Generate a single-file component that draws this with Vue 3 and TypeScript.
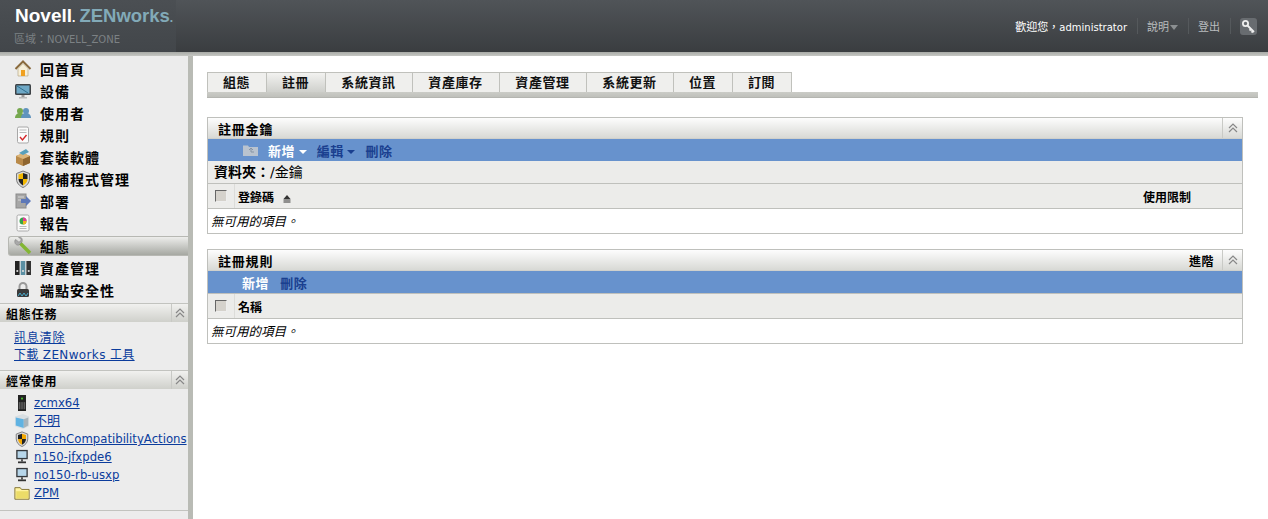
<script setup lang="ts">
const nav = [
  { t: '回首頁', i: 'home' }, { t: '設備', i: 'monitor' }, { t: '使用者', i: 'users' }, { t: '規則', i: 'policy' },
  { t: '套裝軟體', i: 'box' }, { t: '修補程式管理', i: 'shield' }, { t: '部署', i: 'deploy' }, { t: '報告', i: 'report' },
  { t: '組態', i: 'wrench', active: true }, { t: '資產管理', i: 'binder' }, { t: '端點安全性', i: 'lock' },
]
const freq = [
  { t: 'zcmx64', i: 'server' }, { t: '不明', i: 'cube', cjk: true }, { t: 'PatchCompatibilityActions', i: 'shield' },
  { t: 'n150-jfxpde6', i: 'pc' }, { t: 'no150-rb-usxp', i: 'pc' }, { t: 'ZPM', i: 'folder' },
]
const tabs = ['組態', '註冊', '系統資訊', '資產庫存', '資產管理', '系統更新', '位置', '訂閱']
const tabWidths = [60, 59, 87, 87, 87, 87, 59, 59]
</script>

<template>
  <div class="page">
    <header class="top">
      <div class="brand">
        <div class="logo"><span class="nov">Novell<i>.</i></span><span class="zen">ZENworks<i>.</i></span></div>
        <div class="zone"><span class="cj">區域：</span>NOVELL_ZONE</div>
      </div>
      <div class="user">
        <span class="welcome"><span class="cj">歡迎您，</span>administrator</span>
        <span class="sep"></span>
        <span class="ulink">說明<b class="caret"></b></span>
        <span class="sep"></span>
        <span class="ulink">登出</span>
        <span class="sep"></span>
        <span class="keybox">
          <svg width="15" height="15" viewBox="0 0 15 15"><circle cx="4.500" cy="4.500" r="2.600" fill="none" stroke="#eee" stroke-width="1.800"/><path d="M6.500 6.500l6.500 6.500M10 10l-1.500 1.500M12 12l-1.500 1.500" stroke="#eee" stroke-width="1.800" fill="none"/></svg>
        </span>
      </div>
    </header>
    <div class="shadow"></div>
    <div class="body">
      <aside class="side">
        <nav class="nav">
          <div v-for="n in nav" :key="n.t" class="nav-row" :class="{ active: n.active }">
            <span class="nav-ic">
              <svg width="18" height="18" viewBox="0 0 18 18">
                <g v-if="n.i === 'home'"><path d="M1.500 9L9 1.500 16.500 9" fill="none" stroke="#8a6a3c" stroke-width="2"/><path d="M4 8.500L9 3.500l5 5V16H4z" fill="#f6efd8" stroke="#b9a988" stroke-width=".7"/><path d="M7 10h4v6H7z" fill="#f0a020"/></g>
                <g v-else-if="n.i === 'monitor'"><rect x="1" y="2" width="16" height="11" rx="1.500" fill="#3d4246"/><rect x="2.500" y="3.500" width="13" height="8" fill="#6ea8c6"/><path d="M3 4l11 7" stroke="#2f6f8f" stroke-width="1"/><path d="M7.500 13h3v2h-3z" fill="#999"/><path d="M5 15h8v1.500H5z" fill="#bbb"/></g>
                <g v-else-if="n.i === 'users'"><circle cx="6" cy="7" r="3" fill="#76a84f"/><path d="M1 14c0-3 2-5 5-5s5 2 5 5z" fill="#76a84f"/><circle cx="12" cy="7" r="3" fill="#5f93bd"/><path d="M7 14c0-3 2-5 5-5s5 2 5 5z" fill="#5f93bd"/></g>
                <g v-else-if="n.i === 'policy'"><rect x="3.500" y="1" width="11" height="16" rx="1.500" fill="#fbfbfb" stroke="#a8a8a8"/><path d="M5.500 4h7M5.500 6.500h7" stroke="#bbb"/><path d="M6 11l2.500 3 4-5" fill="none" stroke="#d4262a" stroke-width="1.400"/></g>
                <g v-else-if="n.i === 'box'"><path d="M2 8l7-3 7 3v7l-7 3-7-3z" fill="#b98a4a"/><path d="M9 11v7l7-3V8z" fill="#8f6630"/><path d="M2 8l7 3 7-3-7-3z" fill="#dcb67a"/><path d="M5 5l7-4 3 3-6 3z" fill="#58a0bb"/></g>
                <g v-else-if="n.i === 'shield'"><path d="M9 1l6.500 2.500V9c0 4-3 7-6.500 8.500C5.500 16 2.500 13 2.500 9V3.500z" fill="#d8d8d8" stroke="#777"/><path d="M9 3v6H4.500V4.500z" fill="#f3b800"/><path d="M9 9h4.500c0 3-2 5-4.500 6.500z" fill="#f3b800"/><path d="M9 3l4.500 1.500V9H9z" fill="#222"/><path d="M9 9v6.500C6.500 14 4.500 12 4.500 9z" fill="#222"/></g>
                <g v-else-if="n.i === 'deploy'"><rect x="2" y="2" width="10" height="14" fill="#a6a6a6" stroke="#8b8b8b"/><path d="M4 5h6M4 8h6" stroke="#d8d8d8"/><path d="M7 7h5V4l5 5-5 5v-3H7z" fill="#5d78b8"/></g>
                <g v-else-if="n.i === 'report'"><rect x="3" y="1" width="12" height="16" rx="1.500" fill="#fafafa" stroke="#aaa"/><circle cx="9" cy="7" r="3.500" fill="#35a54a"/><path d="M9 7V3.500A3.500 3.500 0 0 1 12.500 7z" fill="#e33a98"/><path d="M9 7h3.500A3.500 3.500 0 0 1 9 10.500z" fill="#f2b51d"/><path d="M5.500 12.500h7M5.500 14.500h7" stroke="#bbb"/></g>
                <g v-else-if="n.i === 'wrench'"><path d="M6 6l10 10" stroke="#83b634" stroke-width="3.500"/><path d="M2 2.500L4.500 5l2-.5.500-2L4.500 0C7.500-.5 9 2 8 5l-3 3C2 9 0 6 1 3z" fill="#a9a9a9" stroke="#7d7d7d" stroke-width=".5"/></g>
                <g v-else-if="n.i === 'binder'"><rect x="1" y="2" width="4.600" height="14" fill="#222"/><rect x="6.700" y="2" width="4.600" height="14" fill="#5a8fa3"/><rect x="12.400" y="2" width="4.600" height="14" fill="#333"/><circle cx="3.300" cy="12" r="1.100" fill="#ddd"/><circle cx="9" cy="12" r="1.100" fill="#ddd"/><circle cx="14.700" cy="12" r="1.100" fill="#ddd"/></g>
                <g v-else-if="n.i === 'lock'"><path d="M5.500 8V5.500a3.500 3.500 0 0 1 7 0V8" fill="none" stroke="#9a9a9a" stroke-width="2"/><rect x="3" y="8" width="12" height="8" rx="1.500" fill="#3a3a3a"/><path d="M4 15l2-3 2 3 2-3 2 3 2-3" fill="none" stroke="#4aa8c8"/></g>
              </svg>
            </span>
            <span>{{ n.t }}</span>
          </div>
        </nav>
        <section class="sbox first">
          <div class="sbox-head">
            <span>組態任務</span>
            <span class="collapse"><svg width="12" height="10" viewBox="0 0 12 10"><path d="M2 5l4-4 4 4M2 9l4-4 4 4" fill="none" stroke="#888" stroke-width="1.200"/></svg></span>
          </div>
          <div class="tasks">
            <a>訊息清除</a>
            <a>下載 ZENworks 工具</a>
          </div>
        </section>
        <section class="sbox second">
          <div class="sbox-head">
            <span>經常使用</span>
            <span class="collapse"><svg width="12" height="10" viewBox="0 0 12 10"><path d="M2 5l4-4 4 4M2 9l4-4 4 4" fill="none" stroke="#888" stroke-width="1.200"/></svg></span>
          </div>
          <div class="freq">
            <div v-for="f in freq" :key="f.t" class="freq-row">
              <span class="fic">
                <svg width="16" height="16" viewBox="0 0 18 18">
                  <g v-if="f.i === 'server'"><rect x="4.500" y="0" width="9" height="18" fill="#222"/><rect x="8" y="3" width="2" height="2" fill="#4ecb2e"/><path d="M6 8v8M8 8v8M10 8v8M12 8v8" stroke="#777"/></g>
                  <g v-else-if="f.i === 'cube'"><path d="M1 4l9-3 7 3v11l-7 3-9-3z" fill="#d8dee2"/><path d="M2 5l9 2v10l-9-3z" fill="#5fb2e2"/><path d="M11 7l5-2v9l-5 3z" fill="#a7b3ba"/></g>
                  <g v-else-if="f.i === 'shield'"><path d="M9 1l6.500 2.500V9c0 4-3 7-6.500 8.500C5.500 16 2.500 13 2.500 9V3.500z" fill="#d8d8d8" stroke="#777"/><path d="M9 3v6H4.500V4.500z" fill="#222"/><path d="M9 9h4.500c0 3-2 5-4.500 6.500z" fill="#222"/><path d="M9 3l4.500 1.500V9H9z" fill="#f3a800"/><path d="M9 9v6.500C6.500 14 4.500 12 4.500 9z" fill="#f3a800"/></g>
                  <g v-else-if="f.i === 'pc'"><rect x="2.500" y="1" width="13" height="10.500" fill="#35383c"/><rect x="4" y="2.500" width="10" height="7.500" fill="#b7d6ea"/><path d="M8 11.500h2V14H8z" fill="#444"/><path d="M4.500 14h9v2h-9z" fill="#333"/></g>
                  <g v-else-if="f.i === 'folder'"><path d="M1 3h6l1.500 2H17v11H1z" fill="#fff3a0" stroke="#7b6a28"/><path d="M2.500 7H16v8H2.500z" fill="#ecdc68"/></g>
                </svg>
              </span>
              <a :class="{ cjk: f.cjk }">{{ f.t }}</a>
            </div>
          </div>
        </section>
        <div class="side-end"></div>
      </aside>
      <div class="gutter"></div>
      <main class="main">
        <div class="tabs">
          <div v-for="(t, i) in tabs" :key="t" class="tab" :class="{ on: i === 1 }" :style="{ width: tabWidths[i] + 'px' }">{{ t }}</div>
        </div>
        <div class="tabbar"></div>

        <section class="panel p1">
          <div class="phead">
            <span class="ptitle">註冊金鑰</span>
            <span class="collapse2"><svg width="12" height="10" viewBox="0 0 12 10"><path d="M2 5l4-4 4 4M2 9l4-4 4 4" fill="none" stroke="#888" stroke-width="1.200"/></svg></span>
          </div>
          <div class="toolbar">
            <svg class="folderup" width="15" height="12" viewBox="0 0 15 12"><path d="M0 1.500h5l1 1.500h9v9H0z" fill="#b9c3cf"/><path d="M6 6l2-2 2 2M8 4v4h3" fill="none" stroke="#8794a4"/></svg>
            <span class="tb white">新增<b class="tcaret w"></b></span>
            <span class="tb blue">編輯<b class="tcaret d"></b></span>
            <span class="tb blue">刪除</span>
          </div>
          <div class="crumb"><b>資料夾：</b>/金鑰</div>
          <div class="thead">
            <span class="chkcell"><span class="chk"></span></span>
            <span class="th grow">登錄碼 <svg class="sort" width="8" height="8" viewBox="0 0 8 8"><path d="M4 0l3.500 4H.5z" fill="#333"/><path d="M.5 5h7M.5 7h7" stroke="#333"/></svg></span>
            <span class="th lim">使用限制</span>
          </div>
          <div class="empty">無可用的項目。</div>
        </section>

        <section class="panel p2">
          <div class="phead">
            <span class="ptitle grow">註冊規則</span>
            <span class="adv">進階</span>
            <span class="collapse2"><svg width="12" height="10" viewBox="0 0 12 10"><path d="M2 5l4-4 4 4M2 9l4-4 4 4" fill="none" stroke="#888" stroke-width="1.200"/></svg></span>
          </div>
          <div class="toolbar second-tb">
            <span class="tb white">新增</span>
            <span class="tb blue">刪除</span>
          </div>
          <div class="thead">
            <span class="chkcell"><span class="chk"></span></span>
            <span class="th grow">名稱</span>
          </div>
          <div class="empty">無可用的項目。</div>
        </section>
      </main>
    </div>
  </div>
</template>

<style scoped>
.page { width: 1268px; height: 519px; overflow: hidden; display: flex; flex-direction: column; background: #fff; font-family: "DejaVu Sans", "Noto Sans CJK TC", sans-serif; color: #000; }
.top { height: 52px; flex: none; display: flex; justify-content: space-between; background: linear-gradient(#505458, #3a3d40); }
.brand { width: 176px; padding: 5px 0 0 15px; box-sizing: border-box; background: linear-gradient(#4b4f53, #42464a); }
.logo { font: bold 19px/22px "Liberation Sans", sans-serif; white-space: nowrap; }
.logo i { font-style: normal; font-size: 12px; }
.nov { color: #fff; }
.zen { color: #82aab8; margin-left: 4px; font-size: 18.500px; }
.zone { margin: 4px 0 0 -1px; font-size: 10px; line-height: 13px; color: #7c8184; white-space: nowrap; }
.user { display: flex; align-items: center; padding: 0 11px 0 0; height: 52px; font-size: 11px; }
.welcome { color: #fff; font-size: 10px; }
.cj { font-size: 11px; }
.sep { width: 1px; height: 16px; background: #55595c; margin: 0 9px 0 10px; }
.ulink { color: #b9bcbe; }
.caret { display: inline-block; border: 4px solid transparent; border-top: 5px solid #8b8f91; border-bottom: 0; margin-left: 1px; vertical-align: 1px; }
.keybox { width: 17px; height: 17px; border-radius: 3px; background: #686c70; display: flex; align-items: center; justify-content: center; }
.shadow { height: 4px; flex: none; background: linear-gradient(#a8aaa6, #c6c7c3); }

.body { flex: 1; display: flex; min-height: 0; }
.side { width: 188px; flex: none; background: #ececec; overflow: hidden; }
.gutter { width: 5px; flex: none; background: #b9bbb5; }
.nav { padding-top: 2px; }
.nav-row { height: 22px; display: flex; align-items: center; margin-left: 8px; padding-left: 6px; font-size: 14px; font-weight: bold; letter-spacing: 1px; white-space: nowrap; box-sizing: border-box; }
.nav-ic { width: 18px; height: 18px; margin-right: 8px; flex: none; display: flex; }
.nav-row.active { height: 20px; margin-top: 2px; margin-bottom: 1px; border: 1px solid #b7b8b3; border-right: 0; border-radius: 3px 0 0 3px; padding-left: 5px; background: linear-gradient(#ededeb, #a6a8a2); }
.sbox { border-top: 1px solid #c2c3bf; }
.first { margin-top: 2px; }
.second { margin-top: 6px; }
.sbox-head { height: 18px; display: flex; justify-content: space-between; align-items: center; padding-left: 6px; font-size: 12px; font-weight: bold; letter-spacing: .8px; background: linear-gradient(#f1f1ef, #cfd0cb); }
.collapse { width: 16px; height: 18px; border-left: 1px solid #c8c9c5; display: flex; align-items: center; justify-content: center; }
.tasks { padding: 8px 0 0 14px; display: flex; flex-direction: column; align-items: flex-start; }
.tasks a { font-size: 12px; line-height: 17px; color: #0b3c9c; text-decoration: underline; white-space: nowrap; letter-spacing: .35px; }
.tasks a:first-child { letter-spacing: .8px; }
.freq { padding: 5px 0 0 14px; }
.freq-row { height: 18px; display: flex; align-items: center; white-space: nowrap; }
.fic { width: 20px; flex: none; display: flex; }
.freq-row a { font-size: 11.700px; color: #0b3c9c; text-decoration: underline; }
.freq-row a.cjk { font-size: 13px; line-height: 16px; }
.side-end { margin-top: 8px; border-top: 1px solid #c2c3bf; }

.main { flex: 1; padding: 16px 10px 0 14px; min-width: 0; }
.tabs { display: flex; height: 20px; box-sizing: border-box; }
.tab { box-sizing: border-box; height: 20px; padding-right: 1px; border: 1px solid #c0c1bc; border-left: 0; border-bottom: 0; background: #efefed; text-align: center; font-size: 13px; font-weight: bold; line-height: 20px; letter-spacing: .6px; color: #111; }
.tab:first-child { border-left: 1px solid #c0c1bc; }
.tab.on { background: linear-gradient(#f2f2f0, #cfd0cc); }
.tabbar { height: 6px; background: linear-gradient(#cbccc7, #bfc0bb); border-bottom: 1px solid #b4b5b0; box-sizing: border-box; }
.panel { width: 1036px; border: 1px solid #bfc0bc; box-sizing: border-box; margin-bottom: 15px; }
.p1 { margin-top: 19px; }
.phead { height: 20px; display: flex; align-items: center; padding-left: 10px; background: linear-gradient(#fdfdfd, #d8d9d5); font-size: 13px; font-weight: bold; letter-spacing: .8px; border-bottom: 1px solid #cfd0cc; }
.ptitle { white-space: nowrap; }
.grow { flex: 1; }
.collapse2 { margin-left: auto; width: 19px; height: 20px; border-left: 1px solid #c9cac6; display: flex; align-items: center; justify-content: center; }
.adv { margin-right: 8px; font-size: 12px; letter-spacing: .5px; }
.toolbar { height: 22px; box-sizing: border-box; background: #6792cd; display: flex; align-items: center; padding-left: 35px; font-size: 13px; font-weight: bold; letter-spacing: .6px; }
.second-tb { height: 23px; padding-left: 34px; border-bottom: 1px solid #bfc0bc; }
.second-tb .tb { margin-right: 11px; }
.folderup { margin-right: 10px; }
.tb { margin-right: 10px; white-space: nowrap; }
.white { color: #fff; }
.blue { color: #1a3f8f; }
.tcaret { display: inline-block; border: 4px solid transparent; border-bottom: 0; margin-left: 3.500px; vertical-align: 2px; }
.tcaret.w { border-top: 4px solid #fff; }
.tcaret.d { border-top: 4px solid #1a3f8f; }
.crumb { height: 23px; background: #ececea; border-bottom: 1px solid #bfc0bc; box-sizing: border-box; padding-left: 6px; font-size: 14px; line-height: 23px; white-space: nowrap; }
.thead { height: 25px; box-sizing: border-box; display: flex; align-items: center; background: #ececea; border-bottom: 1px solid #bfc0bc; }
.chkcell { width: 27px; height: 24px; display: flex; align-items: center; justify-content: center; border-right: 1px solid #dcdcd9; box-sizing: border-box; }
.chk { width: 12px; height: 12px; background: #d5d2cc; border: 1px solid; border-color: #666 #eee #eee #666; box-sizing: border-box; }
.th { padding-left: 3px; font-size: 12px; font-weight: bold; }
.sort { margin-left: 5px; vertical-align: -1px; }
.lim { width: 101px; flex: none; padding-left: 2px; box-sizing: border-box; }
.empty { height: 24px; line-height: 25px; padding-left: 3px; font-size: 12.500px; font-style: italic; }
</style>
